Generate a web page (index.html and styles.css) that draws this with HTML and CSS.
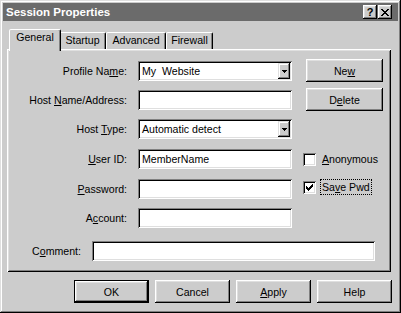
FILE: index.html
```html
<!DOCTYPE html>
<html>
<head>
<meta charset="utf-8">
<title>Session Properties</title>
<link rel="stylesheet" href="styles.css">
</head>
<body>
<div class="window">
  <div class="titlebar">
    <span class="title">Session Properties</span>
    <div class="caption-btns">
      <span class="cbtn">?</span>
      <span class="cbtn"><svg width="8" height="7" viewBox="0 0 8 7" shape-rendering="crispEdges"><path d="M0 0h2v1H0zM6 0h2v1H6zM1 1h2v1H1zM5 1h2v1H5zM2 2h4v1H2zM3 3h2v1H3zM2 4h4v1H2zM1 5h2v1H1zM5 5h2v1H5zM0 6h2v1H0zM6 6h2v1H6z" fill="#000"/></svg></span>
    </div>
  </div>

  <div class="tabs">
    <div class="tab active w-general">General</div>
    <div class="tab w-startup">Startup</div>
    <div class="tab w-advanced">Advanced</div>
    <div class="tab w-firewall">Firewall</div>
  </div>

  <div class="panel">
    <div class="rows">
      <div class="row">
        <span class="lbl">Profile Na<u>m</u>e:</span>
        <div class="field combo"><span class="val">My&nbsp; Website</span><span class="drop"><svg width="5" height="3" viewBox="0 0 5 3" shape-rendering="crispEdges"><path d="M0 0h5v1H0zM1 1h3v1H1zM2 2h1v1H2z" fill="#000"/></svg></span></div>
        <div class="btn side-btn">Ne<u>w</u></div>
      </div>
      <div class="row">
        <span class="lbl">Host <u>N</u>ame/Address:</span>
        <div class="field"></div>
        <div class="btn side-btn">D<u>e</u>lete</div>
      </div>
      <div class="row">
        <span class="lbl">Host <u>T</u>ype:</span>
        <div class="field combo"><span class="val">Automatic detect</span><span class="drop"><svg width="5" height="3" viewBox="0 0 5 3" shape-rendering="crispEdges"><path d="M0 0h5v1H0zM1 1h3v1H1zM2 2h1v1H2z" fill="#000"/></svg></span></div>
      </div>
      <div class="row">
        <span class="lbl"><u>U</u>ser ID:</span>
        <div class="field"><span class="val">MemberName</span></div>
        <div class="check check-anon"><span class="box"></span><span class="check-lbl"><u>A</u>nonymous</span></div>
      </div>
      <div class="row">
        <span class="lbl"><u>P</u>assword:</span>
        <div class="field"></div>
        <div class="check check-save"><span class="box"><svg width="7" height="7" viewBox="0 0 7 7" shape-rendering="crispEdges"><path d="M6 0h1v1H6zM5 1h2v1H5zM0 2h1v1H0zM4 2h3v1H4zM0 3h2v1H0zM3 3h3v1H3zM0 4h5v1H0zM1 5h3v1H1zM2 6h1v1H2z" fill="#000"/></svg></span><span class="check-lbl focus">Sa<u>v</u>e Pwd</span></div>
      </div>
      <div class="row">
        <span class="lbl">A<u>c</u>count:</span>
        <div class="field"></div>
      </div>
    </div>
    <div class="row comment-row">
      <span class="lbl lbl-short">C<u>o</u>mment:</span>
      <div class="field field-wide"></div>
    </div>
  </div>

  <div class="actions">
    <div class="btn act-btn default">OK</div>
    <div class="btn act-btn">Cancel</div>
    <div class="btn act-btn"><u>A</u>pply</div>
    <div class="btn act-btn">Help</div>
  </div>
</div>
</body>
</html>
```
FILE: styles.css
```css
* { box-sizing: border-box; }
html, body { margin: 0; padding: 0; background: #cccccc; }
body {
  font-family: "Liberation Sans", Arial, sans-serif;
  font-size: 10.6px;
  line-height: 12px;
  color: #000;
}
u { text-decoration: underline; text-underline-offset: 1px; }

.window {
  width: 401px;
  height: 313px;
  background: #cccccc;
  padding: 3px;
  display: flex;
  flex-direction: column;
  box-shadow: inset -1px -1px 0 #000, inset 1px 1px 0 #dfdfdf,
              inset -2px -2px 0 #808080, inset 2px 2px 0 #fff;
}

.titlebar {
  height: 18px;
  flex: none;
  background: #6b6b6b;
  display: flex;
  align-items: center;
  padding: 0 6px 0 3px;
  color: #fff;
}
.title { font-weight: bold; font-size: 11.5px; }
.caption-btns { margin-left: auto; display: flex; gap: 1px; }
.cbtn {
  width: 14px;
  height: 14px;
  background: #cccccc;
  display: flex;
  align-items: center;
  justify-content: center;
  color: #000;
  font-weight: bold;
  font-size: 11px;
  box-shadow: inset -1px -1px 0 #000, inset 1px 1px 0 #fff,
              inset -2px -2px 0 #808080, inset 2px 2px 0 #dfdfdf;
}

.tabs {
  display: flex;
  align-items: flex-end;
  height: 20px;
  flex: none;
  margin-top: 8px;
  padding-left: 8px;
}
.tab {
  height: 17px;
  border: 1px solid;
  border-bottom: 0;
  border-color: #fff #000 transparent #fff;
  border-radius: 2px 2px 0 0;
  box-shadow: inset -1px 0 0 #808080;
  padding-top: 1px;
  text-align: center;
  background: #cccccc;
}
.tab.active {
  height: 22px;
  margin: 0 -2px -2px;
  position: relative;
  z-index: 1;
}
.w-general { width: 48px; }
.w-general.active { width: 52px; }
.w-startup { width: 47px; }
.w-advanced { width: 60px; }
.w-firewall { width: 47px; }

.panel {
  margin-left: 4px;
  width: 384px;
  height: 223px;
  flex: none;
  padding: 12px 2px 0;
  box-shadow: inset 1px 1px 0 #fff, inset -1px -1px 0 #000,
              inset 2px 2px 0 #dfdfdf, inset -2px -2px 0 #808080;
}
.rows { display: flex; flex-direction: column; }
.row { display: flex; align-items: center; height: 20px; }
.rows .row:nth-child(2), .rows .row:nth-child(3), .rows .row:nth-child(6) { margin-top: 9px; }
.rows .row:nth-child(4), .rows .row:nth-child(5) { margin-top: 10px; }

.lbl { width: 118px; flex: none; text-align: right; margin-right: 11px; white-space: nowrap; }
.lbl-short { width: 72px; }
.comment-row { margin-top: 13px; }

.field {
  width: 154px;
  height: 20px;
  flex: none;
  background: #fff;
  display: flex;
  align-items: center;
  padding: 0 2px 0 4px;
  box-shadow: inset 1px 1px 0 #808080, inset -1px -1px 0 #fff,
              inset 2px 2px 0 #000, inset -2px -2px 0 #dfdfdf;
}
.field-wide { width: 283px; }
.val { white-space: pre; }
.drop {
  margin-left: auto;
  width: 12px;
  height: 16px;
  background: #cccccc;
  display: flex;
  align-items: center;
  justify-content: center;
  box-shadow: inset -1px -1px 0 #000, inset 1px 1px 0 #dfdfdf,
              inset -2px -2px 0 #808080, inset 2px 2px 0 #fff;
}

.btn {
  background: #cccccc;
  display: flex;
  align-items: center;
  justify-content: center;
  box-shadow: inset -1px -1px 0 #000, inset 1px 1px 0 #fff,
              inset -2px -2px 0 #808080, inset 2px 2px 0 #dfdfdf;
}
.side-btn {
  width: 77px;
  height: 23px;
  margin-left: 14px;
  align-self: flex-start;
  margin-top: -2px;
}

.check { display: flex; align-items: center; margin-left: 11px; align-self: flex-start; }
.check-anon { margin-top: 3px; }
.check-save { margin-top: 1px; }
.box {
  width: 13px;
  height: 13px;
  background: #fff;
  display: flex;
  align-items: center;
  justify-content: center;
  box-shadow: inset 1px 1px 0 #808080, inset -1px -1px 0 #fff,
              inset 2px 2px 0 #000, inset -2px -2px 0 #dfdfdf;
}
.check-lbl { margin-left: 5px; padding: 1px 1px; line-height: 12px; }
.focus { outline: 1px dotted #000; outline-offset: 0; }

.actions {
  display: flex;
  justify-content: flex-end;
  gap: 6px;
  margin-top: 8px;
  padding-right: 6px;
}
.act-btn { width: 75px; height: 23px; }
.default {
  border: 1px solid #000;
}
```
